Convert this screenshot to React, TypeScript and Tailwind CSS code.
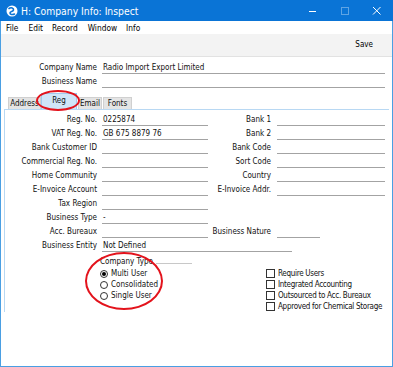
import React from "react";

const F = "font-['Liberation_Sans_Narrow','DejaVu_Sans_Condensed','Liberation_Sans',sans-serif]";

function Field({ w, value }: { w: string; value?: string }) {
  return (
    <div className={`${w} shrink-0 ml-[5px] h-[11px] border-b border-[#a3a3a3] leading-[10px] pl-[1px] whitespace-nowrap overflow-hidden`}>
      {value}
    </div>
  );
}

function Row({
  label,
  value,
  w = "w-[106px]",
  rLabel,
  rValue,
  rW = "w-[108px]",
}: {
  label: string;
  value?: string;
  w?: string;
  rLabel?: string;
  rValue?: string;
  rW?: string;
}) {
  return (
    <div className="flex h-[14px] items-start pt-[2px]">
      <div className="w-[96px] shrink-0 text-right leading-[10px] whitespace-nowrap">{label}</div>
      <Field w={w} value={value} />
      {rLabel !== undefined && (
        <>
          <div className="w-[63px] shrink-0 text-right leading-[10px] whitespace-nowrap">{rLabel}</div>
          <div className="ml-[1px]" />
          <Field w={rW} value={rValue} />
        </>
      )}
    </div>
  );
}

function Radio({ label, checked }: { label: string; checked?: boolean }) {
  return (
    <div className="flex h-[11px] items-center">
      <div className="w-[8px] h-[8px] rounded-full border border-[#333] bg-white flex items-center justify-center shrink-0">
        {checked && <div className="w-[4px] h-[4px] rounded-full bg-black" />}
      </div>
      <div className="ml-[3px] leading-[10px] whitespace-nowrap">{label}</div>
    </div>
  );
}

function Check({ label }: { label: string }) {
  return (
    <div className="flex h-[11px] items-center">
      <div className="w-[9px] h-[9px] border border-[#333] bg-white shrink-0" />
      <div className="ml-[3px] leading-[10px] whitespace-nowrap tracking-[-0.3px]">{label}</div>
    </div>
  );
}

export default function App() {
  return (
    <div className={`${F} relative w-[393px] h-[367px] bg-white text-[8px] text-[#111] overflow-hidden`}>
      {/* window frame */}
      <div className="flex flex-col h-full border-x border-b border-[#4a9fe3]">
        {/* title bar */}
        <div className="flex h-[21px] items-center bg-[#0a74d6] text-white -mx-[1px] shrink-0">
          <svg width="14" height="14" viewBox="0 0 14 14" className="ml-[5px]">
            <circle cx="7" cy="7" r="5.5" fill="white" />
            <path d="M4 4.5 C6 3 9 4 8.5 6 C8 8 5 7 5 9 C5 10.5 7.5 11 9.5 10" stroke="#0a74d6" strokeWidth="1.6" fill="none" strokeLinecap="round" />
          </svg>
          <div className="ml-[2px] text-[10.3px] leading-[12px]">H: Company Info: Inspect</div>
          <div className="flex-1" />
          <svg width="10" height="10" viewBox="0 0 10 10" className="mr-[22px]">
            <line x1="1" y1="5.5" x2="8" y2="5.5" stroke="white" strokeWidth="1" />
          </svg>
          <svg width="10" height="10" viewBox="0 0 10 10" className="mr-[22px]">
            <rect x="1.5" y="1.5" width="7" height="7" stroke="rgba(255,255,255,0.35)" strokeWidth="1" fill="none" />
          </svg>
          <svg width="10" height="10" viewBox="0 0 10 10" className="mr-[11px]">
            <line x1="1" y1="1" x2="8.5" y2="8.5" stroke="white" strokeWidth="1" />
            <line x1="8.5" y1="1" x2="1" y2="8.5" stroke="white" strokeWidth="1" />
          </svg>
        </div>
        {/* menu bar */}
        <div className="flex h-[13px] items-center text-[8.3px] leading-[12px] text-black shrink-0">
          <span className="ml-[5px]">File</span>
          <span className="ml-[10px]">Edit</span>
          <span className="ml-[9px]">Record</span>
          <span className="ml-[10px]">Window</span>
          <span className="ml-[9px]">Info</span>
        </div>
        {/* toolbar */}
        <div className="flex h-[23px] items-center justify-end bg-[#f3f3f3] border-b border-[#e2e2e2] shrink-0">
          <span className="mr-[19px] text-black">Save</span>
        </div>
        {/* content */}
        <div className="flex flex-col pt-[4px]">
          <Row label="Company Name" value="Radio Import Export Limited" w="w-[283px]" />
          <Row label="Business Name" w="w-[283px]" />
          {/* tabs */}
          <div className="flex items-end h-[19px] mt-[2px] ml-[7px] mr-[4px]">
            <div className="h-[13px] w-[33px] bg-[#e4e4e4] border border-b-0 border-[#d0d0d0] leading-[12px] flex justify-center whitespace-nowrap">Address</div>
            <div className="h-[17px] w-[36px] bg-[#cfe5f8] border border-b-0 border-[#9fc9ee] flex justify-center pt-[2px] leading-[10px]">Reg</div>
            <div className="h-[13px] w-[24px] bg-[#e4e4e4] border border-b-0 border-[#d0d0d0] leading-[12px] ml-[1px] flex justify-center">Email</div>
            <div className="h-[13px] w-[29px] bg-[#e4e4e4] border border-b-0 border-[#d0d0d0] leading-[12px] ml-[1px] flex justify-center">Fonts</div>
          </div>
          <div className="flex flex-col ml-[3px] mr-[3px] border-t border-l border-[#b8d8f3] pt-[3px] -mt-[1px]">
            <div className="-ml-[4px] flex flex-col">
              <Row label="Reg. No." value="0225874" rLabel="Bank 1" />
              <Row label="VAT Reg. No." value="GB 675 8879 76" rLabel="Bank 2" />
              <Row label="Bank Customer ID" rLabel="Bank Code" />
              <Row label="Commercial Reg. No." rLabel="Sort Code" />
              <Row label="Home Community" rLabel="Country" />
              <Row label="E-Invoice Account" rLabel="E-Invoice Addr." />
              <Row label="Tax Region" />
              <Row label="Business Type" value="-" />
              <Row label="Acc. Bureaux" rLabel="Business Nature" rW="w-[43px]" />
              <Row label="Business Entity" value="Not Defined" w="w-[190px]" />
              <div className="flex mt-[3px]">
                <div className="ml-[99px] w-[92px] shrink-0 flex flex-col">
                  <div className="flex h-[12px] items-center">
                    <span className="leading-[10px] whitespace-nowrap">Company Type</span>
                    <div className="flex-1 ml-[3px] mt-[3px] border-t border-[#c8c8c8]" />
                  </div>
                  <Radio label="Multi User" checked />
                  <Radio label="Consolidated" />
                  <Radio label="Single User" />
                </div>
                <div className="ml-[74px] shrink-0 flex flex-col pt-[12px]">
                  <Check label="Require Users" />
                  <Check label="Integrated Accounting" />
                  <Check label="Outsourced to Acc. Bureaux" />
                  <Check label="Approved for Chemical Storage" />
                </div>
              </div>
            </div>
          </div>
        </div>
      </div>
      {/* red annotation ellipses */}
      <div className="absolute left-[36px] top-[90px] w-[44px] h-[21px] rounded-[50%] border-2 border-[#e3131c]" />
      <div className="absolute left-[85px] top-[252px] w-[78px] h-[58px] rounded-[50%] border-2 border-[#e3131c]" />
    </div>
  );
}
